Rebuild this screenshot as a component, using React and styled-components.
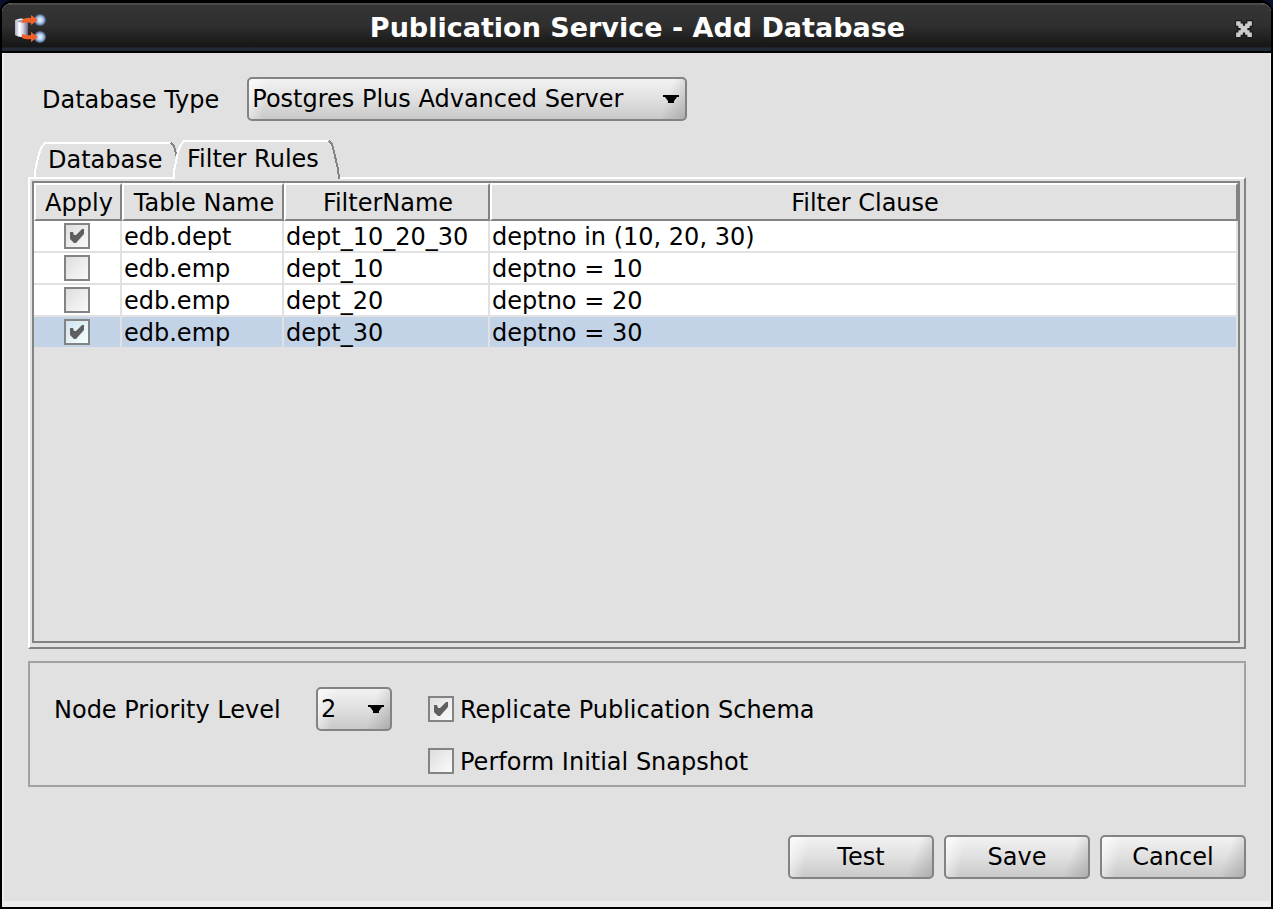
import React, { useState } from "react";
import styled, { createGlobalStyle, css } from "styled-components";

const GlobalStyle = createGlobalStyle`
  * { box-sizing: border-box; }
  body {
    margin: 0;
    background: #0a1030;
    color: #000;
    font-family: "DejaVu Sans", sans-serif;
    font-size: 24px;
    line-height: 28px;
  }
  button, input, select { font: inherit; color: inherit; margin: 0; }
`;

const Window = styled.div`
  display: flex;
  flex-direction: column;
  min-height: 100vh;
  border: 2px solid #000;
  border-top-width: 3px;
  border-radius: 12px 12px 0 0;
  background: #e1e1e1;
  overflow: hidden;
`;

const TitleBar = styled.header`
  display: grid;
  grid-template-columns: 32px 1fr 24px;
  align-items: center;
  height: 50px;
  padding: 0 18px 0 12px;
  border-top: 2px solid #4b4c48;
  border-bottom: 2px solid #000;
  background: linear-gradient(#353535, #2f2f2f 45%, #161616 90%, #222a35 94%, #222a35);
`;

const Title = styled.h1`
  margin: 0;
  text-align: center;
  color: #fff;
  font-weight: bold;
  font-size: 27px;
  line-height: 32px;
`;

const CloseButton = styled.button`
  display: flex;
  justify-content: flex-end;
  padding: 2px 0 0;
  border: 0;
  background: none;
`;

const Body = styled.main`
  flex: 1;
  display: flex;
  flex-direction: column;
  padding: 24px 24px 22px;
  border: solid #ededeb;
  border-width: 0 1px 6px 2px;
`;

const TypeRow = styled.div`
  display: flex;
  align-items: center;
  gap: 28px;
  padding-left: 14px;
`;

const FieldLabel = styled.label`
  padding-top: 2px;
  white-space: nowrap;
`;

const raised = css`
  height: 44px;
  border: 2px solid #838383;
  border-radius: 5px;
  background:
    linear-gradient(100deg, rgba(255, 255, 255, 0.7), rgba(255, 255, 255, 0) 20px),
    linear-gradient(290deg, rgba(130, 130, 130, 0.4), rgba(130, 130, 130, 0) 24px),
    linear-gradient(#f2f2f2, #e0e0e0 50%, #c9c9c9);
`;

const ComboFrame = styled.span`
  position: relative;
  display: block;
  width: ${(p) => p.$width};
  svg {
    position: absolute;
    right: 8px;
    top: 18px;
    pointer-events: none;
  }
`;

const ComboSelect = styled.select`
  ${raised}
  display: block;
  appearance: none;
  width: 100%;
  padding: 0 0 0 3px;
`;

function Combo({ id, width, options, value }) {
  return (
    <ComboFrame $width={width}>
      <ComboSelect id={id} defaultValue={value}>
        {options.map((o) => (
          <option key={o}>{o}</option>
        ))}
      </ComboSelect>
      <svg width="16" height="8" viewBox="0 0 16 8" aria-hidden="true">
        <path d="M0 0H16V2H14L11 6V8H5V6L2 2H0Z" />
      </svg>
    </ComboFrame>
  );
}

const TabStrip = styled.div`
  display: flex;
  align-items: flex-end;
  padding-left: 6px;
  margin-top: 19px;
`;

const TabButton = styled.button`
  position: relative;
  z-index: ${(p) => (p.$active ? 2 : 0)};
  width: ${(p) => p.$width}px;
  height: ${(p) => (p.$active ? 39 : 37)}px;
  margin-bottom: -2px;
  margin-right: -10px;
  padding: 0 0 1px 14px;
  border: 0;
  background: none;
  text-align: left;
  white-space: nowrap;
  svg {
    position: absolute;
    left: 0;
    top: 0;
    z-index: -1;
  }
`;

function Tab({ label, width, active, onClick }) {
  const h = active ? 39 : 37;
  const w = width;
  const edge = `M1 ${h}L1 ${h - 8}L5 12L7 6L11 1H${w - 12}`;
  const fade = `M${w - 12} 1L${w - 9} 4L${w - 7} 12L${w - 3} ${h - 10}L${w - 2} ${h}`;
  return (
    <TabButton type="button" role="tab" aria-selected={active} $active={active} $width={w} onClick={onClick}>
      <svg width={w} height={h} viewBox={`0 0 ${w} ${h}`} fill="none" strokeWidth="2" shapeRendering="crispEdges" aria-hidden="true">
        {active && <path d={`${edge}L${w - 7} 12L${w - 3} ${h - 10}L${w - 2} ${h}Z`} fill="#e1e1e1" />}
        <path d={edge} stroke="#fff" />
        <path d={fade} stroke="#838383" />
      </svg>
      {label}
    </TabButton>
  );
}

const TabPanel = styled.section`
  position: relative;
  z-index: 1;
  flex: 1;
  display: flex;
  padding: 2px 4px 4px 2px;
  border: 2px solid;
  border-color: #fff #838383 #838383 #fff;
`;

const TableView = styled.div`
  flex: 1;
  border: 2px solid #838383;
`;

const Table = styled.table`
  width: 100%;
  table-layout: fixed;
  border-collapse: separate;
  border-spacing: 0;
`;

const Col = styled.col`
  width: ${(p) => p.$width};
`;

const HeadCell = styled.th`
  height: 38px;
  padding: 2px 0 0 2px;
  border: 2px solid;
  border-color: #fff #838383 #838383 #fff;
  font-weight: normal;
  text-align: center;
  white-space: nowrap;
`;

const Row = styled.tr`
  background: ${(p) => (p.$selected ? "#c2d2e7" : "#fff")};
`;

const Cell = styled.td`
  height: 32px;
  padding: ${(p) => (p.$control ? "0" : "2px 0 0 2px")};
  border: solid #e1e1e1;
  border-width: 0 2px 2px 0;
  white-space: nowrap;
`;

const CheckFrame = styled.span`
  display: grid;
  width: 26px;
  height: 26px;
  margin: ${(p) => (p.$centered ? "0 auto" : "0")};
  > * { grid-area: 1 / 1; }
  svg { pointer-events: none; }
  input:not(:checked) + svg { display: none; }
`;

const CheckInput = styled.input`
  appearance: none;
  width: 26px;
  height: 26px;
  border: 2px solid #838383;
  background: ${(p) =>
    p.$highlighted
      ? "linear-gradient(135deg, #cfe4ee, #f6ffff)"
      : "linear-gradient(135deg, #dedede, #fafafa)"};
`;

function Check({ centered, highlighted, ...rest }) {
  return (
    <CheckFrame $centered={centered}>
      <CheckInput type="checkbox" $highlighted={highlighted} {...rest} />
      <svg width="26" height="26" viewBox="0 0 26 26" aria-hidden="true">
        <path d="M6 9H9L10 12H12L18 6H20V11L12 20H10L6 16Z" fill="#5f5f5f" />
      </svg>
    </CheckFrame>
  );
}

const Options = styled.section`
  display: grid;
  grid-template-columns: 226px auto 1fr;
  column-gap: 36px;
  row-gap: 8px;
  align-items: center;
  margin-top: 12px;
  padding: 24px 24px 2px;
  border: 2px solid #a2a2a2;
`;

const CheckRow = styled.div`
  grid-column: 3;
  display: flex;
  align-items: center;
  gap: 6px;
  height: 44px;
`;

const Actions = styled.footer`
  display: flex;
  justify-content: flex-end;
  gap: 10px;
  margin-top: 48px;
`;

const ActionButton = styled.button`
  ${raised}
  width: 146px;
  padding: 0;
`;

function AppIcon() {
  return (
    <svg width="32" height="32" viewBox="0 0 32 32" aria-hidden="true">
      <defs>
        <linearGradient id="drum">
          <stop offset="0" stopColor="#a9a9c6" />
          <stop offset="0.35" stopColor="#ffffff" />
          <stop offset="0.6" stopColor="#d5d5e8" />
          <stop offset="1" stopColor="#66667f" />
        </linearGradient>
        <radialGradient id="ball">
          <stop offset="0" stopColor="#e8f3ff" />
          <stop offset="0.5" stopColor="#b4cdec" />
          <stop offset="1" stopColor="#3f567a" />
        </radialGradient>
      </defs>
      <circle cx="26" cy="8" r="6" fill="url(#ball)" />
      <circle cx="26" cy="25" r="6" fill="url(#ball)" />
      <path d="M1 8Q7 5 14 8V23Q7 27 1 23Z" fill="url(#drum)" />
      <path d="M3 9Q7 7 12 9Q7 12 3 9Z" fill="#9a9ab8" />
      <path d="M8 8Q12 5 17 6V3L24 8L17 13V11Q13 10 8 11Z" fill="#f0602a" />
      <path d="M8 22Q13 24 17 23V20L24 25L17 30V27Q12 28 8 26Z" fill="#f0602a" />
    </svg>
  );
}

function CloseIcon() {
  const x = "M2 2H6V4H8V6H10V4H12V2H16V6H14V8H12V10H14V12H16V16H12V14H10V12H8V14H6V16H2V12H4V10H6V8H4V6H2Z";
  return (
    <svg width="18" height="18" viewBox="1 1 16 16" aria-hidden="true">
      <path d={x} fill="#ccc" stroke="#191919" strokeWidth="2" paintOrder="stroke" />
    </svg>
  );
}

const rules = [
  { table: "edb.dept", name: "dept_10_20_30", clause: "deptno in (10, 20, 30)", apply: true },
  { table: "edb.emp", name: "dept_10", clause: "deptno = 10", apply: false },
  { table: "edb.emp", name: "dept_20", clause: "deptno = 20", apply: false },
  { table: "edb.emp", name: "dept_30", clause: "deptno = 30", apply: true },
];

export default function App() {
  const [selected, setSelected] = useState(3);
  const [tab, setTab] = useState("rules");
  return (
    <>
      <GlobalStyle />
      <Window>
        <TitleBar>
          <AppIcon />
          <Title>Publication Service - Add Database</Title>
          <CloseButton type="button" aria-label="Close">
            <CloseIcon />
          </CloseButton>
        </TitleBar>
        <Body>
          <TypeRow>
            <FieldLabel htmlFor="dbtype">Database Type</FieldLabel>
            <Combo
              id="dbtype"
              width="440px"
              value="Postgres Plus Advanced Server"
              options={["Postgres Plus Advanced Server", "PostgreSQL", "Oracle", "SQL Server"]}
            />
          </TypeRow>
          <TabStrip role="tablist">
            <Tab label="Database" width={149} active={tab === "database"} onClick={() => setTab("database")} />
            <Tab label="Filter Rules" width={168} active={tab === "rules"} onClick={() => setTab("rules")} />
          </TabStrip>
          <TabPanel role="tabpanel">
            <TableView>
              <Table>
                <colgroup>
                  <Col $width="88px" />
                  <Col $width="162px" />
                  <Col $width="206px" />
                  <Col />
                </colgroup>
                <thead>
                  <tr>
                    <HeadCell>Apply</HeadCell>
                    <HeadCell>Table Name</HeadCell>
                    <HeadCell>FilterName</HeadCell>
                    <HeadCell>Filter Clause</HeadCell>
                  </tr>
                </thead>
                <tbody>
                  {rules.map((r, i) => (
                    <Row key={r.name} $selected={i === selected} onClick={() => setSelected(i)}>
                      <Cell $control>
                        <Check
                          centered
                          highlighted={i === selected}
                          defaultChecked={r.apply}
                          aria-label={`Apply ${r.name}`}
                        />
                      </Cell>
                      <Cell>{r.table}</Cell>
                      <Cell>{r.name}</Cell>
                      <Cell>{r.clause}</Cell>
                    </Row>
                  ))}
                </tbody>
              </Table>
            </TableView>
          </TabPanel>
          <Options>
            <FieldLabel htmlFor="priority">Node Priority Level</FieldLabel>
            <Combo id="priority" width="76px" value="2" options={["1", "2", "3"]} />
            <CheckRow>
              <Check id="schema" defaultChecked />
              <FieldLabel htmlFor="schema">Replicate Publication Schema</FieldLabel>
            </CheckRow>
            <CheckRow>
              <Check id="snapshot" />
              <FieldLabel htmlFor="snapshot">Perform Initial Snapshot</FieldLabel>
            </CheckRow>
          </Options>
          <Actions>
            <ActionButton type="button">Test</ActionButton>
            <ActionButton type="button">Save</ActionButton>
            <ActionButton type="button">Cancel</ActionButton>
          </Actions>
        </Body>
      </Window>
    </>
  );
}
